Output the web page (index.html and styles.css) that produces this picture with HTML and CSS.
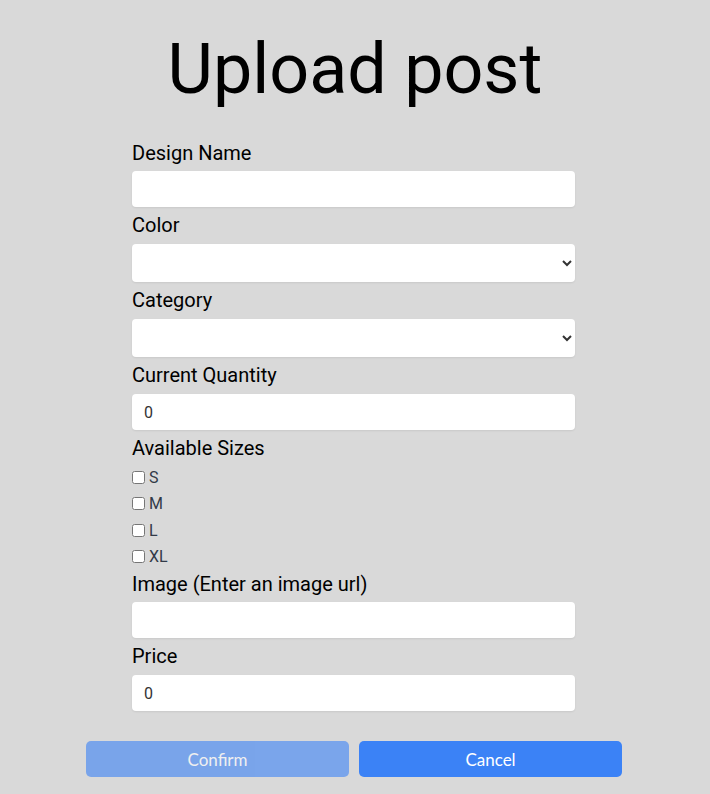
FILE: index.html
```html
<!DOCTYPE html>
<html lang="en">
<head>
<meta charset="utf-8">
<title>Upload post</title>
<link rel="stylesheet" href="styles.css">
</head>
<body>
<main class="page">
  <h1 class="title">Upload post</h1>
  <form class="form">
    <label class="label" for="name">Design Name</label>
    <input class="field" id="name" type="text">

    <label class="label" for="color">Color</label>
    <select class="field select" id="color"><option></option></select>

    <label class="label" for="category">Category</label>
    <select class="field select" id="category"><option></option></select>

    <label class="label" for="qty">Current Quantity</label>
    <input class="field field-num" id="qty" type="number" value="0">

    <span class="label">Available Sizes</span>
    <div class="sizes">
      <label class="size"><input type="checkbox" class="check">S</label>
      <label class="size"><input type="checkbox" class="check">M</label>
      <label class="size"><input type="checkbox" class="check">L</label>
      <label class="size"><input type="checkbox" class="check">XL</label>
    </div>

    <label class="label label-after-sizes" for="img">Image (Enter an image url)</label>
    <input class="field" id="img" type="text">

    <label class="label" for="price">Price</label>
    <input class="field field-num" id="price" type="number" value="0">
  </form>
  <div class="actions">
    <button class="btn btn-disabled" type="button" disabled>Confirm</button>
    <button class="btn" type="button">Cancel</button>
  </div>
</main>
</body>
</html>
```

FILE: styles.css
```css
html, body {
  margin: 0;
  padding: 0;
  background: #d9d9d9;
  height: 100%;
}

body {
  font-family: Roboto, "Liberation Sans", Arial, sans-serif;
  color: #000;
  overflow: hidden;
}

.page {
  display: flex;
  flex-direction: column;
  align-items: center;
  padding-top: 27px;
}

.title {
  margin: 0;
  font-size: 70px;
  font-weight: 400;
  line-height: 84px;
}

.form {
  width: 443px;
  margin-top: 30px;
  margin-left: -3px;
  display: flex;
  flex-direction: column;
}

.label {
  display: block;
  font-size: 20px;
  line-height: 24px;
  margin: 6px 0;
}

.label:first-child {
  margin-top: 0;
}

.field {
  box-sizing: border-box;
  height: 36px;
  width: 100%;
  border: none;
  border-radius: 4px;
  background: #fff;
  box-shadow: 0 1px 2px rgba(0, 0, 0, 0.08);
  padding: 0 12px;
  font-family: Roboto, "Liberation Sans", Arial, sans-serif;
  font-size: 16px;
  color: #333;
  outline: none;
}

.field-num {
  margin-top: 1px;
}

.select {
  height: 38px;
  margin-top: 1px;
  padding: 0 8px;
}

.field::-webkit-inner-spin-button,
.field::-webkit-outer-spin-button {
  -webkit-appearance: none;
  margin: 0;
}

.sizes {
  display: flex;
  flex-direction: column;
  margin-top: -2px;
}

.size {
  display: flex;
  align-items: center;
  height: 26.5px;
  font-size: 16px;
  color: #323a48;
}

.check {
  width: 13px;
  height: 13px;
  margin: 0 4px 0 0;
}

.label-after-sizes {
  margin-top: 2px;
}

.actions {
  display: flex;
  gap: 10px;
  margin-top: 30px;
  margin-left: -2px;
  width: 536px;
}

.btn {
  flex: 1;
  height: 36px;
  border: none;
  border-radius: 5px;
  background: #3b82f6;
  color: #fff;
  font-family: Lato, "Open Sans", sans-serif;
  font-size: 17px;
}

.btn-disabled {
  opacity: 0.6;
}
```
